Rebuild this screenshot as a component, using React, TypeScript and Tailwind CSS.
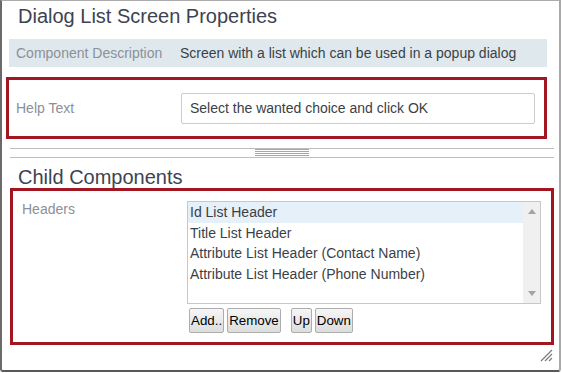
import React from 'react'

const items = [
  'Id List Header',
  'Title List Header',
  'Attribute List Header (Contact Name)',
  'Attribute List Header (Phone Number)',
]

function Btn({ label, className }: { label: string; className?: string }) {
  return (
    <button
      className={
        'h-[25px] px-px text-[13.333px] leading-none text-black border border-[#adadad] rounded-[2px] bg-gradient-to-b from-[#f6f6f6] to-[#dddddd] ' +
        (className ?? '')
      }
    >
      {label}
    </button>
  )
}

export default function App() {
  return (
    <div
      className="relative w-[561px] h-[372px] bg-white flex flex-col border-t border-t-[#ababab] border-l-2 border-l-[#6a6a6a] border-r-2 border-r-[#a9a9a9] border-b-2 border-b-[#585858] rounded-b-[3px]"
      style={{ fontFamily: '"Liberation Sans", Arial, sans-serif' }}
    >
      {/* Title */}
      <div className="mt-[3px] pl-[16px] h-[24px] text-[20px] leading-[24px] text-[#3d4351]">
        Dialog List Screen Properties
      </div>

      {/* Component description */}
      <div className="mt-[11px] ml-[7px] w-[538px] h-[28px] flex items-center bg-[#dfe8ec] text-[14px]">
        <span className="w-[171px] pl-[7px] text-[#8b9099]">Component Description</span>
        <span className="text-[#3b3f48]">Screen with a list which can be used in a popup dialog</span>
      </div>

      {/* Help text (highlighted) */}
      <div className="mt-[10px] ml-[4px] w-[541px] h-[62px] border-[3px] border-[#a31621] flex items-center">
        <span className="w-[172px] pl-[7px] text-[14px] text-[#8b9099]">Help Text</span>
        <div className="w-[354px] h-[31px] border border-[#cccccc] rounded-[2px] flex items-center pl-[8px] text-[14px] text-[#3b3f48]">
          Select the wanted choice and click OK
        </div>
      </div>

      {/* Splitter */}
      <div className="mt-[9px] ml-[8px] w-[544px] h-[10px] border-t border-b border-[#bdbdbd] flex justify-center">
        <div className="w-[54px] flex flex-col gap-px">
          <div className="h-px bg-[#a6a6a6]" />
          <div className="h-px bg-[#a6a6a6]" />
          <div className="h-px bg-[#a6a6a6]" />
          <div className="h-px bg-[#a6a6a6]" />
        </div>
      </div>

      {/* Child components */}
      <div className="mt-[8px] pl-[16px] h-[22px] text-[20px] leading-[22px] text-[#3d4351]">
        Child Components
      </div>

      <div className="ml-[8px] w-[544px] h-[157px] border-[3px] border-[#a31621] flex pt-[10px]">
        <span className="w-[174px] pl-[9px] text-[14px] leading-[16px] text-[#8b9099]">Headers</span>
        <div className="flex flex-col">
          <div className="w-[354px] h-[103px] border border-[#c8c8c8] flex">
            <div className="flex-1 flex flex-col text-[14px] text-[#3b3f48]">
              {items.map((it, i) => (
                <div
                  key={it}
                  className={'h-[20.5px] leading-[20.5px] pl-[2px] ' + (i === 0 ? 'bg-[#e5f0f8]' : '')}
                >
                  {it}
                </div>
              ))}
            </div>
            <div className="w-[17px] bg-[#f0f0f0] flex flex-col justify-between items-center py-[7px]">
              <svg width="8" height="5" viewBox="0 0 8 5">
                <path d="M0 5 L4 0 L8 5 Z" fill="#a3a3a3" />
              </svg>
              <svg width="8" height="5" viewBox="0 0 8 5">
                <path d="M0 0 L4 5 L8 0 Z" fill="#a3a3a3" />
              </svg>
            </div>
          </div>
          <div className="mt-[4px] ml-[2px] flex gap-[3px]">
            <Btn label="Add.." />
            <Btn label="Remove" />
            <Btn label="Up" className="ml-[7px]" />
            <Btn label="Down" />
          </div>
        </div>
      </div>

      {/* Resize grip */}
      <svg className="absolute right-[6px] bottom-[8px]" width="13" height="13" viewBox="0 0 13 13">
        <path d="M1 12 L12 1 M5 12 L12 5 M9 12 L12 9" stroke="#7a7a7a" strokeWidth="1.2" />
      </svg>
    </div>
  )
}
